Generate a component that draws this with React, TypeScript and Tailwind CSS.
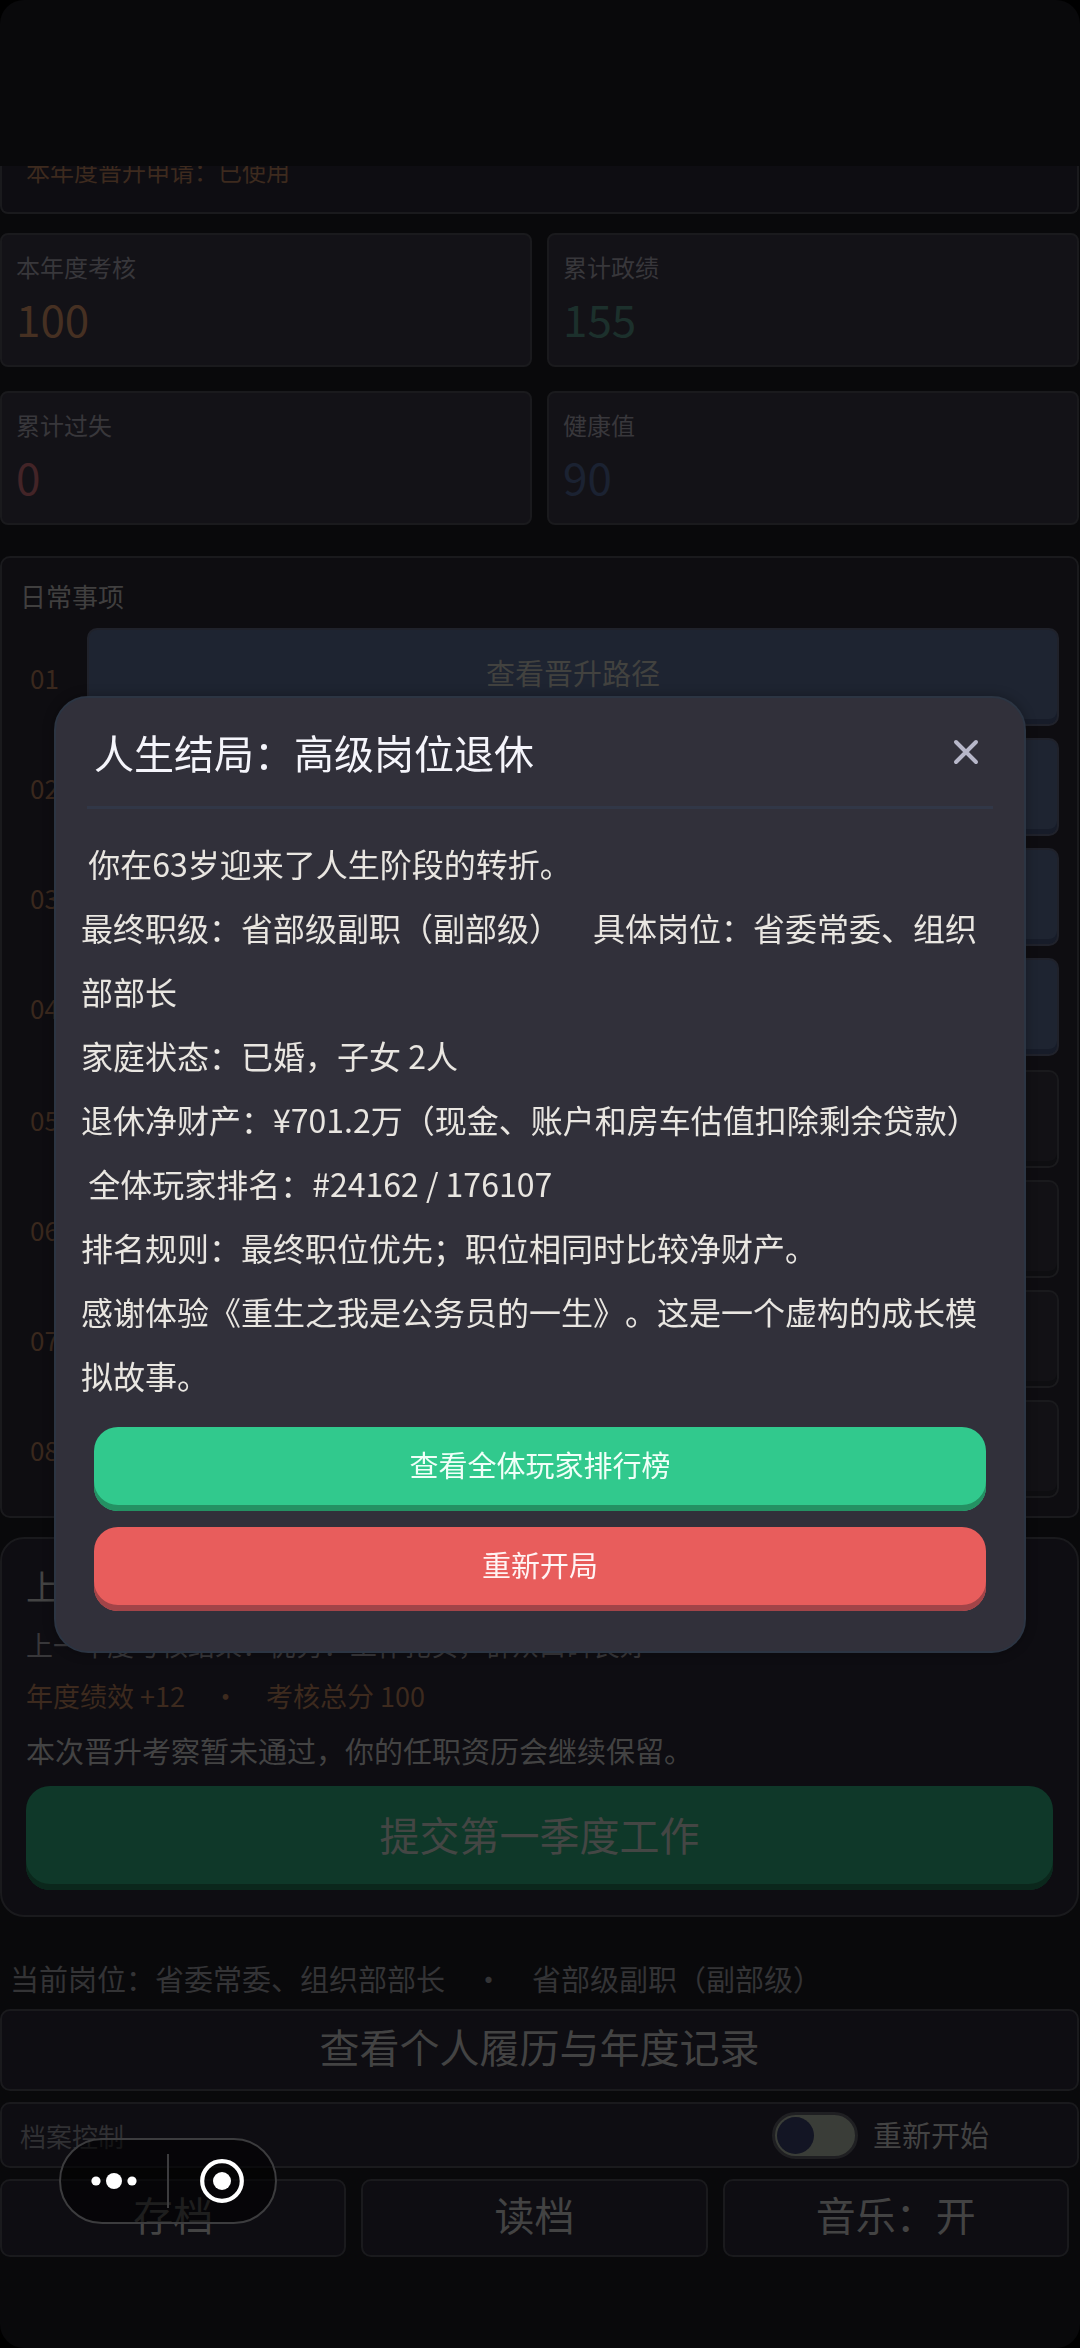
import { useState } from 'react';

const stats = [
  { label: '本年度考核', value: 100, color: 'text-[#463022]' },
  { label: '累计政绩', value: 155, color: 'text-[#1c302c]' },
  { label: '累计过失', value: 0, color: 'text-[#432427]' },
  { label: '健康值', value: 90, color: 'text-[#1b2232]' },
];

type Task = { no: string; label?: string };

const primaryTasks: Task[] = [
  { no: '01', label: '查看晋升路径' },
  { no: '02' },
  { no: '03' },
  { no: '04' },
];

const secondaryTasks: Task[] = [{ no: '05' }, { no: '06' }, { no: '07' }, { no: '08' }];

const endingText = [
  ' 你在63岁迎来了人生阶段的转折。',
  '最终职级：省部级副职（副部级）　具体岗位：省委常委、组织部部长',
  '家庭状态：已婚，子女 2人',
  '退休净财产：¥701.2万（现金、账户和房车估值扣除剩余贷款）',
  ' 全体玩家排名：#24162 / 176107',
  '排名规则：最终职位优先；职位相同时比较净财产。',
  '感谢体验《重生之我是公务员的一生》。这是一个虚构的成长模拟故事。',
];

function TaskList({ tasks, primary }: { tasks: Task[]; primary?: boolean }) {
  return (
    <ul className="flex flex-col gap-3">
      {tasks.map((task) => (
        <li key={task.no} className="flex items-center">
          <span className="w-[67px] shrink-0 pl-2.5 text-[26px] text-[#3a281d]">{task.no}</span>
          <button
            type="button"
            aria-label={task.label ?? `事项 ${task.no}`}
            className={
              primary
                ? 'h-[98px] flex-1 rounded-[10px] border-2 border-[#20222b] bg-[#1e2431] pb-2 text-[29px] text-[#42423f] shadow-[inset_0_-5px_0_#171c29]'
                : 'h-[98px] flex-1 rounded-[10px] border-2 border-[#1a1a1d] bg-[#121115] pb-2 text-[29px] text-[#42423f] shadow-[inset_0_-5px_0_#0e0e11]'
            }
          >
            {task.label}
          </button>
        </li>
      ))}
    </ul>
  );
}

function EndingModal({ onClose }: { onClose: () => void }) {
  return (
    <div className="fixed inset-0 flex items-center justify-center">
      <div
        role="dialog"
        aria-labelledby="ending-title"
        className="w-[90%] rounded-[34px] border-2 border-[#2c3543] bg-[#31303a] pt-[30px] pb-10 shadow-[0_0_12px_rgba(0,0,0,0.3)]"
      >
        <div className="flex items-center justify-between px-[38px]">
          <h2 id="ending-title" className="text-[40px] leading-[48px] text-[#f5f5fb]">
            人生结局：高级岗位退休
          </h2>
          <button
            type="button"
            aria-label="关闭"
            onClick={onClose}
            className="flex h-10 w-10 items-center justify-center text-[#b7b7c9]"
          >
            <svg width="26" height="26" viewBox="0 0 26 26" fill="none" stroke="currentColor" strokeWidth="4" strokeLinecap="round">
              <path d="M3 3L23 23M23 3L3 23" />
            </svg>
          </button>
        </div>
        <div className="mx-[31px] mt-[30px] h-[3px] bg-[#313747]" />

        <div className="mt-[22px] px-[25px] text-[32px] leading-[64px] whitespace-pre-wrap text-[#e9e6e1]">
          {endingText.map((line) => (
            <p key={line}>{line}</p>
          ))}
        </div>

        <div className="mt-5 flex flex-col gap-4 px-[38px]">
          <button
            type="button"
            className="h-[84px] rounded-3xl bg-[#31c98d] pb-2 text-[29px] text-[#f0fff8] shadow-[inset_0_-6px_0_#249163]"
          >
            查看全体玩家排行榜
          </button>
          <button
            type="button"
            className="h-[84px] rounded-3xl bg-[#e85d5c] pb-2 text-[29px] text-[#fff3f3] shadow-[inset_0_-6px_0_#a24448]"
          >
            重新开局
          </button>
        </div>
      </div>
    </div>
  );
}

// Mini program menu capsule, always on top of the page
function Capsule() {
  return (
    <div className="fixed bottom-[124px] left-[59px] flex h-[86px] w-[218px] items-center rounded-full border-2 border-[#3c3c3e] bg-black/55 text-white">
      <button type="button" aria-label="更多" className="flex h-full flex-1 items-center justify-center">
        <svg width="46" height="18" viewBox="0 0 46 18" fill="currentColor">
          <circle cx="5" cy="9" r="4.6" />
          <circle cx="23" cy="9" r="8" />
          <circle cx="41" cy="9" r="4.6" />
        </svg>
      </button>
      <span className="h-[54px] w-0.5 bg-[#3c3c3e]" />
      <button type="button" aria-label="退出" className="flex h-full flex-1 items-center justify-center">
        <svg width="44" height="44" viewBox="0 0 44 44" fill="none">
          <circle cx="22" cy="22" r="19.8" stroke="currentColor" strokeWidth="4.2" />
          <circle cx="22" cy="22" r="9" fill="currentColor" />
        </svg>
      </button>
    </div>
  );
}

export default function App() {
  const [showEnding, setShowEnding] = useState(true);
  const [restart, setRestart] = useState(false);

  return (
    <div className="bg-black font-['Noto_Sans_CJK_SC',sans-serif] [text-spacing-trim:space-all]">
      <div className="min-h-screen rounded-3xl bg-[#09090b] pt-[166px] pr-px">
        <main className="overflow-hidden">
          <section className="-mt-[7px] rounded-b-lg border-2 border-[#1a1a1d] border-t-0 bg-[#0e0d12] px-6 pb-[29px]">
            <p className="text-2xl leading-6 text-[#3d2a1e]">本年度晋升申请：已使用</p>
          </section>

          <section className="mt-[19px] grid grid-cols-2 gap-x-[15px] gap-y-6">
            {stats.map((stat) => (
              <div key={stat.label} className="h-[134px] rounded-lg border-2 border-[#1a1a1d] bg-[#131217] px-3.5 pt-4">
                <p className="text-2xl leading-8 text-[#38373b]">{stat.label}</p>
                <p className={`mt-[15px] text-[44px] leading-10 ${stat.color}`}>{stat.value}</p>
              </div>
            ))}
          </section>

          <section className="mt-[31px] rounded-[10px] border-2 border-[#1a1a1d] bg-[#0e0d11] px-[18px] pt-[22px] pb-[18px]">
            <h3 className="text-[26px] leading-8 text-[#403f3f]">日常事项</h3>
            <div className="mt-4 flex flex-col gap-3.5">
              <TaskList tasks={primaryTasks} primary />
              <TaskList tasks={secondaryTasks} />
            </div>
          </section>

          <section className="mt-[19px] rounded-3xl border-2 border-[#1a1a1d] bg-[#0e0d12] px-6 pt-[27px] pb-[25px]">
            <h3 className="text-[34px] leading-10 text-[#434343]">上一年度总结</h3>
            <p className="mt-[19px] text-[27px] leading-10 text-[#38373a]">
              上一年度考核结果：优秀：工作扎实，群众口碑良好
            </p>
            <p className="mt-[11px] text-[27px] leading-10 text-[#3d2a1e]">年度绩效 +12　・　考核总分 100</p>
            <p className="mt-3.5 text-[29px] leading-10 text-[#434343]">
              本次晋升考察暂未通过，你的任职资历会继续保留。
            </p>
            <button
              type="button"
              className="mt-4 h-[104px] w-full rounded-3xl bg-[#0f3829] pb-2 text-[40px] text-[#444644] shadow-[inset_0_-6px_0_#0b271c]"
            >
              提交第一季度工作
            </button>
          </section>

          <p className="mt-[41px] pl-2.5 text-[29px] leading-10 text-[#343436]">
            当前岗位：省委常委、组织部部长　・　省部级副职（副部级）
          </p>

          <button
            type="button"
            className="mt-[11px] h-[82px] w-full rounded-[10px] border-2 border-[#1a1a1d] bg-[#0e0d12] pb-2 text-[40px] text-[#434343]"
          >
            查看个人履历与年度记录
          </button>

          <div className="mt-[11px] flex h-[66px] items-center justify-between rounded-[10px] border-2 border-[#1a1a1d] bg-[#0e0d12] pr-[88px] pl-[18px]">
            <span className="text-[26px] text-[#303033]">档案控制</span>
            <label className="flex items-center gap-[15px] text-[29px] text-[#434343]">
              <input
                type="checkbox"
                checked={restart}
                onChange={(e) => setRestart(e.target.checked)}
                className="h-[47px] w-[86px] appearance-none rounded-full border-[3px] border-[#1f1f22] bg-[#3a3d38] p-0.5 before:block before:h-[37px] before:w-[37px] before:rounded-full before:bg-[#131524] checked:before:ml-auto"
              />
              重新开始
            </label>
          </div>

          <div className="mt-[11px] grid grid-cols-3 gap-[15px] pr-2.5">
            {['存档', '读档', '音乐：开'].map((label) => (
              <button
                key={label}
                type="button"
                className="h-[78px] rounded-[10px] border-2 border-[#1a1a1d] bg-[#0e0d12] pb-2 text-[40px] text-[#434343]"
              >
                {label}
              </button>
            ))}
          </div>
        </main>
      </div>

      {showEnding && <EndingModal onClose={() => setShowEnding(false)} />}
      <Capsule />
    </div>
  );
}
